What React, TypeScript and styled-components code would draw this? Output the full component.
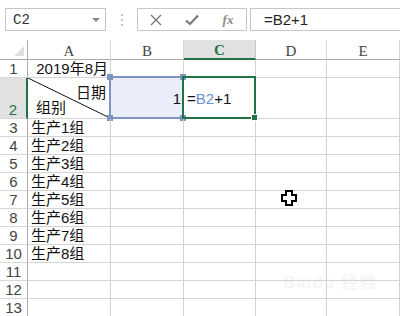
import React from 'react';
import styled, { createGlobalStyle } from 'styled-components';

const GlobalStyle = createGlobalStyle`
  html, body {
    margin: 0;
    padding: 0;
    background: #ffffff;
  }
  body {
    width: 400px;
    height: 316px;
    overflow: hidden;
    font-family: "Liberation Sans", "Noto Sans CJK SC", sans-serif;
  }
`;

const COLS = [28, 83, 73, 72, 71, 73];
const ROW_HEIGHTS = [18, 41, 18, 18, 18, 18, 18, 18, 18, 18, 18, 18, 18];

const Page = styled.div`
  width: 400px;
  height: 316px;
  overflow: hidden;
  position: relative;
  background: #fff;
`;

const Toolbar = styled.div`
  height: 40px;
  display: flex;
  align-items: flex-start;
  padding: 8px 0 0 5px;
  box-sizing: border-box;
`;

const NameBox = styled.div`
  width: 101px;
  height: 23px;
  box-sizing: border-box;
  border: 1px solid #c6c6c6;
  display: flex;
  align-items: center;
  justify-content: space-between;
  padding: 0 5px 0 7px;
  font-family: "Liberation Mono", monospace;
  font-size: 14px;
  color: #333;
`;

const DropArrow = styled.span`
  width: 0;
  height: 0;
  border-left: 4px solid transparent;
  border-right: 4px solid transparent;
  border-top: 4px solid #8a8a8a;
`;

const Dots = styled.div`
  width: 31px;
  height: 23px;
  display: flex;
  flex-direction: column;
  align-items: center;
  justify-content: center;
  gap: 3px;
  span {
    width: 2px;
    height: 2px;
    background: #c4c4c4;
  }
`;

const ButtonGroup = styled.div`
  width: 110px;
  height: 23px;
  box-sizing: border-box;
  border: 1px solid #c6c6c6;
  display: flex;
  align-items: center;
`;

const ToolBtn = styled.div`
  flex: 1;
  height: 100%;
  display: flex;
  align-items: center;
  justify-content: center;
  color: #7a7a7a;
`;

const Fx = styled.span`
  font-family: "Liberation Serif", serif;
  font-style: italic;
  font-size: 13px;
  color: #8a8a8a;
  font-weight: bold;
`;

const FormulaBox = styled.div`
  margin-left: 3px;
  flex: 1;
  height: 23px;
  box-sizing: border-box;
  border: 1px solid #c6c6c6;
  border-right: none;
  display: flex;
  align-items: center;
  padding-left: 13px;
  font-size: 15px;
  color: #222;
`;

const Grid = styled.div`
  display: grid;
  grid-template-columns: ${COLS.map((c) => c + 'px').join(' ')};
  grid-template-rows: 20px ${ROW_HEIGHTS.map((h) => h + 'px').join(' ')};
`;

const Cell = styled.div<{ $align?: 'left' | 'right'; $middle?: boolean }>`
  position: relative;
  box-sizing: border-box;
  border-right: 1px solid #d4d4d4;
  border-bottom: 1px solid #d4d4d4;
  display: flex;
  align-items: ${({ $middle }) => ($middle ? 'center' : 'flex-end')};
  justify-content: ${({ $align }) => ($align === 'right' ? 'flex-end' : 'flex-start')};
  padding: 0 2px 0 3px;
  font-size: 15px;
  line-height: 17px;
  color: #111;
  white-space: nowrap;
`;

const ColHead = styled.div<{ $active?: boolean }>`
  box-sizing: border-box;
  border-right: 1px solid ${({ $active }) => ($active ? '#c6c6c6' : '#d8d8d8')};
  border-bottom: ${({ $active }) => ($active ? '2px solid #217346' : '1px solid #ababab')};
  background: ${({ $active }) => ($active ? '#e1e1e1' : '#ffffff')};
  color: ${({ $active }) => ($active ? '#217346' : '#444')};
  font-family: "Liberation Serif", serif;
  font-weight: ${({ $active }) => ($active ? 'bold' : 'normal')};
  font-size: 15px;
  display: flex;
  align-items: center;
  justify-content: center;
  padding-top: 3px;
`;

const Corner = styled.div`
  position: relative;
  box-sizing: border-box;
  border-right: 1px solid #ababab;
  border-bottom: 1px solid #ababab;
  &::after {
    content: '';
    position: absolute;
    right: 3px;
    bottom: 3px;
    width: 0;
    height: 0;
    border-left: 10px solid transparent;
    border-bottom: 10px solid #dfdfdf;
  }
`;

const RowHead = styled.div<{ $active?: boolean }>`
  box-sizing: border-box;
  border-right: ${({ $active }) => ($active ? '2px solid #217346' : '1px solid #ababab')};
  border-bottom: 1px solid #d8d8d8;
  background: ${({ $active }) => ($active ? '#e1e1e1' : '#ffffff')};
  color: ${({ $active }) => ($active ? '#217346' : '#444')};
  font-family: "Liberation Sans", sans-serif;
  font-size: 15px;
  display: flex;
  align-items: flex-end;
  justify-content: center;
  line-height: 17px;
`;

const RefBox = styled.div`
  position: absolute;
  inset: -2px -1px -1px -2px;
  border: 2px solid #7d94c2;
  background: #e9eefa;
  z-index: 0;
`;

const Handle = styled.span<{ $pos: 'tl' | 'tr' | 'bl' | 'br' }>`
  position: absolute;
  width: 6px;
  height: 6px;
  background: #7d94c2;
  ${({ $pos }) => ($pos[0] === 't' ? 'top: -4px;' : 'bottom: -4px;')}
  ${({ $pos }) => ($pos[1] === 'l' ? 'left: -4px;' : 'right: -4px;')}
`;

const ActiveBox = styled.div`
  position: absolute;
  inset: -2px -1px -1px -2px;
  border: 2px solid #217346;
  z-index: 2;
  &::after {
    content: '';
    position: absolute;
    right: -4px;
    bottom: -4px;
    width: 5px;
    height: 5px;
    background: #217346;
    border: 1px solid #fff;
  }
`;

const CellText = styled.span`
  position: relative;
  z-index: 1;
`;

const RefText = styled.span`
  color: #6b8ed0;
`;

const DiagCell = styled(Cell)`
  display: block;
  padding: 0;
`;

const DiagTop = styled.span`
  position: absolute;
  right: 4px;
  top: 6px;
`;

const DiagBottom = styled.span`
  position: absolute;
  left: 8px;
  bottom: 2px;
`;

const Diagonal = styled.svg`
  position: absolute;
  inset: 0;
  width: 100%;
  height: 100%;
`;

const Cursor = styled.svg`
  position: absolute;
  left: 281px;
  top: 190px;
`;

const Watermark = styled.div`
  position: absolute;
  left: 283px;
  top: 268px;
  font-family: "Liberation Sans", "Noto Sans CJK SC", sans-serif;
  font-size: 17px;
  font-weight: bold;
  color: rgba(210, 210, 210, 0.22);
  letter-spacing: 1px;
`;

const groups = ['生产1组', '生产2组', '生产3组', '生产4组', '生产5组', '生产6组', '生产7组', '生产8组'];
const colLetters = ['A', 'B', 'C', 'D', 'E'];

const App: React.FC = () => {
  const rows: React.ReactNode[] = [];

  for (let r = 1; r <= 13; r++) {
    rows.push(
      <RowHead key={'h' + r} $active={r === 2}>
        {r}
      </RowHead>
    );
    for (let c = 0; c < 5; c++) {
      const key = `${r}-${c}`;
      if (r === 1 && c === 0) {
        rows.push(
          <Cell key={key} $align="right">
            2019年8月
          </Cell>
        );
      } else if (r === 2 && c === 0) {
        rows.push(
          <DiagCell key={key}>
            <Diagonal preserveAspectRatio="none" viewBox="0 0 100 100">
              <line x1="0" y1="0" x2="100" y2="100" stroke="#111" strokeWidth="1" vectorEffect="non-scaling-stroke" />
            </Diagonal>
            <DiagTop>日期</DiagTop>
            <DiagBottom>组别</DiagBottom>
          </DiagCell>
        );
      } else if (r === 2 && c === 1) {
        rows.push(
          <Cell key={key} $align="right" $middle>
            <RefBox>
              <Handle $pos="tl" />
              <Handle $pos="tr" />
              <Handle $pos="bl" />
              <Handle $pos="br" />
            </RefBox>
            <CellText>1</CellText>
          </Cell>
        );
      } else if (r === 2 && c === 2) {
        rows.push(
          <Cell key={key} $middle>
            <ActiveBox />
            <CellText>
              =<RefText>B2</RefText>+1
            </CellText>
          </Cell>
        );
      } else if (r >= 3 && r <= 10 && c === 0) {
        rows.push(<Cell key={key}>{groups[r - 3]}</Cell>);
      } else {
        rows.push(<Cell key={key} />);
      }
    }
  }

  return (
    <Page>
      <GlobalStyle />
      <Toolbar>
        <NameBox>
          C2
          <DropArrow />
        </NameBox>
        <Dots>
          <span />
          <span />
          <span />
        </Dots>
        <ButtonGroup>
          <ToolBtn>
            <svg width="12" height="12" viewBox="0 0 12 12">
              <path d="M1 1 L11 11 M11 1 L1 11" stroke="#7a7a7a" strokeWidth="1.4" />
            </svg>
          </ToolBtn>
          <ToolBtn>
            <svg width="14" height="12" viewBox="0 0 14 12">
              <path d="M1 6.5 L5 10 L13 1.5" stroke="#7a7a7a" strokeWidth="2.2" fill="none" />
            </svg>
          </ToolBtn>
          <ToolBtn>
            <Fx>fx</Fx>
          </ToolBtn>
        </ButtonGroup>
        <FormulaBox>=B2+1</FormulaBox>
      </Toolbar>
      <Grid>
        <Corner />
        {colLetters.map((l) => (
          <ColHead key={l} $active={l === 'C'}>
            {l}
          </ColHead>
        ))}
        {rows}
      </Grid>
      <Cursor width="16" height="16" viewBox="0 0 16 16">
        <path
          d="M5 1 H11 V5 H15 V11 H11 V15 H5 V11 H1 V5 H5 Z"
          fill="#fff"
          stroke="#000"
          strokeWidth="2"
        />
      </Cursor>
      <Watermark>Baidu 经验</Watermark>
    </Page>
  );
};

export default App;
